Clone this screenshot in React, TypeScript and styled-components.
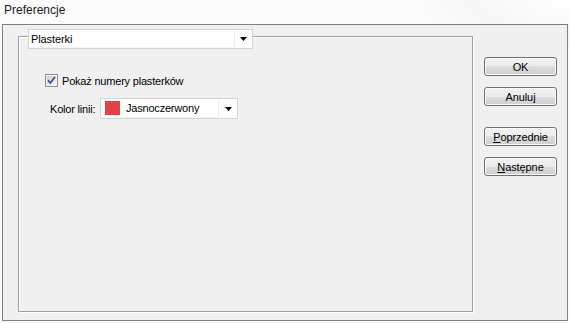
import React from "react";
import styled, { createGlobalStyle } from "styled-components";

const GlobalStyle = createGlobalStyle`
  html, body {
    margin: 0;
    padding: 0;
    background: #fcfcfc;
  }
  body {
    font-family: "Liberation Sans", Arial, sans-serif;
    font-size: 11px;
    color: #000;
  }
  * { box-sizing: border-box; }
`;

const Window = styled.div`
  width: 570px;
  height: 323px;
  display: flex;
  flex-direction: column;
  background: radial-gradient(ellipse 160px 60px at 570px 0px, #ffffff 0%, #f7f7f7 60%, #fcfcfc 100%);
  overflow: hidden;
`;

const TitleBar = styled.div`
  height: 24px;
  padding: 2px 0 0 4px;
  font-size: 12px;
  line-height: 16px;
  color: #1a1a1a;
`;

const Panel = styled.div`
  margin: 0 2px;
  height: 297px;
  border: 1px solid #808080;
  background: #f0f0f0;
  display: flex;
  align-items: flex-start;
  padding: 11px 0 0 15px;
`;

const GroupBox = styled.div`
  width: 455px;
  height: 276px;
  border: 1px solid #a0a0a0;
  box-shadow: inset 1px 1px 0 #ffffff, 1px 1px 0 #ffffff;
  display: flex;
  flex-direction: column;
  align-items: flex-start;
`;

const Combo = styled.div<{ $width: number; $height: number }>`
  width: ${(p) => p.$width}px;
  height: ${(p) => p.$height}px;
  border: 1px solid #d4d4d4;
  background: #ffffff;
  display: flex;
  align-items: stretch;
`;

const HeaderCombo = styled(Combo)`
  margin: -8px 0 0 9px;
  letter-spacing: -0.1px;
`;

const ComboField = styled.div<{ $pad: number }>`
  flex: 1;
  display: flex;
  align-items: center;
  gap: 6px;
  padding-left: ${(p) => p.$pad}px;
  border-right: 1px solid #ededed;
  border-bottom: 1px solid #f3f3f3;
  white-space: nowrap;
`;

const ArrowArea = styled.div<{ $w: number }>`
  width: ${(p) => p.$w}px;
  display: flex;
  align-items: center;
  justify-content: center;
  background: #fdfdfd;
`;

const Swatch = styled.div<{ $color: string }>`
  width: 15px;
  height: 14px;
  background: ${(p) => p.$color};
`;

const CheckRow = styled.label`
  margin: 25px 0 0 26px;
  display: flex;
  align-items: center;
  gap: 4px;
  height: 13px;
  letter-spacing: -0.2px;
  white-space: nowrap;
`;

const ColorRow = styled.div`
  margin: 11px 0 0 31px;
  display: flex;
  align-items: center;
  letter-spacing: -0.2px;
`;

const Label = styled.span`
  width: 50px;
  white-space: nowrap;
`;

const ButtonColumn = styled.div`
  margin: 21px 0 0 11px;
  display: flex;
  flex-direction: column;
`;

const Button = styled.button<{ $gap: number }>`
  width: 73px;
  height: 19px;
  margin-top: ${(p) => p.$gap}px;
  padding: 0;
  border: 1px solid #707070;
  border-radius: 3px;
  background: linear-gradient(#f2f2f2 0%, #ebebeb 50%, #dddddd 50%, #cfcfcf 100%);
  box-shadow: inset 0 0 0 1px #fbfbfb;
  font-family: "Liberation Sans", Arial, sans-serif;
  font-size: 11px;
  letter-spacing: -0.1px;
  color: #000;
  line-height: 16px;
  text-align: center;

  u {
    text-decoration: underline;
    text-underline-offset: 1px;
  }
`;

const Arrow = () => (
  <svg width="7" height="4" viewBox="0 0 7 4">
    <polygon points="0,0 7,0 3.5,4" fill="#000" />
  </svg>
);

const CheckBox = () => (
  <svg width="13" height="13" viewBox="0 0 13 13">
    <defs>
      <linearGradient id="cbg" x1="0" y1="0" x2="1" y2="1">
        <stop offset="0" stopColor="#c9ccd1" />
        <stop offset="1" stopColor="#f6f6f6" />
      </linearGradient>
    </defs>
    <rect x="0.5" y="0.5" width="12" height="12" fill="#f4f4f4" stroke="#8f8f8f" />
    <rect x="2" y="2" width="9" height="9" fill="url(#cbg)" stroke="#e8e8e8" strokeWidth="0" />
    <path d="M3 6.2 L5.3 9 L10 3" fill="none" stroke="#3b4f8a" strokeWidth="1.7" />
  </svg>
);

export default function App() {
  return (
    <>
      <GlobalStyle />
      <Window>
        <TitleBar>Preferencje</TitleBar>
        <Panel>
          <GroupBox>
            <HeaderCombo $width={225} $height={20}>
              <ComboField $pad={2}>Plasterki</ComboField>
              <ArrowArea $w={17}>
                <Arrow />
              </ArrowArea>
            </HeaderCombo>
            <CheckRow>
              <CheckBox />
              <span>Pokaż numery plasterków</span>
            </CheckRow>
            <ColorRow>
              <Label>Kolor linii:</Label>
              <Combo $width={138} $height={21}>
                <ComboField $pad={4}>
                  <Swatch $color="#e04343" />
                  <span>Jasnoczerwony</span>
                </ComboField>
                <ArrowArea $w={18}>
                  <Arrow />
                </ArrowArea>
              </Combo>
            </ColorRow>
          </GroupBox>
          <ButtonColumn>
            <Button $gap={0}>OK</Button>
            <Button $gap={11}>Anuluj</Button>
            <Button $gap={21}>
              <u>P</u>oprzednie
            </Button>
            <Button $gap={11}>
              <u>N</u>astępne
            </Button>
          </ButtonColumn>
        </Panel>
      </Window>
    </>
  );
}
